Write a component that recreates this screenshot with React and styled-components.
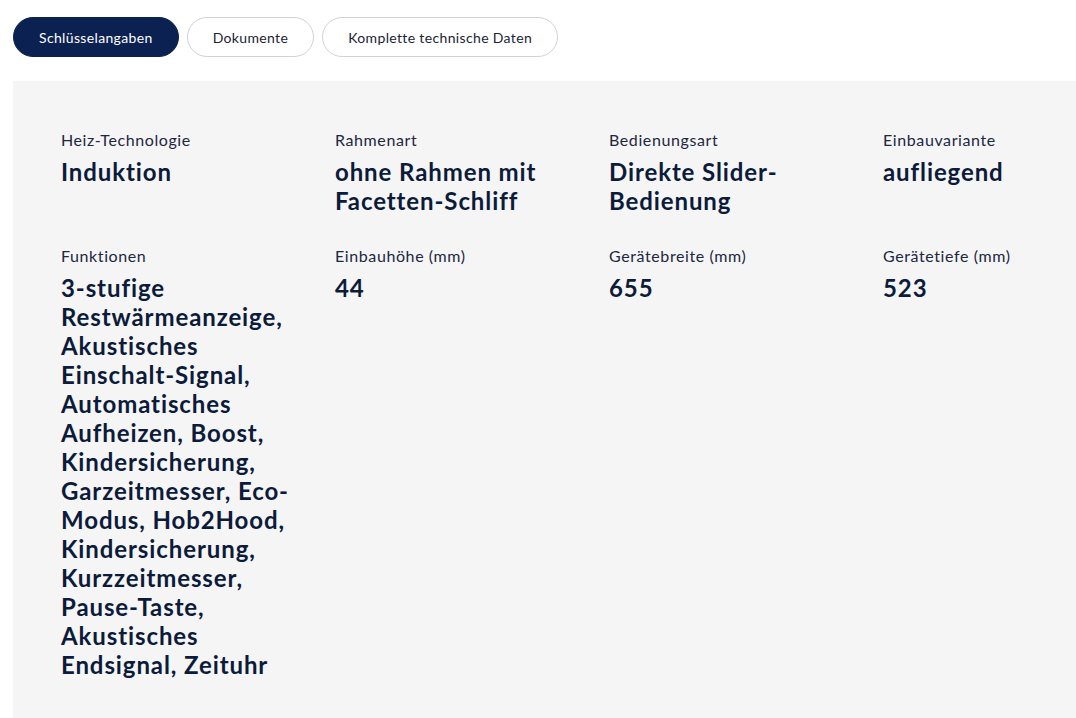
import React, { useState } from "react"
import styled, { createGlobalStyle } from "styled-components"

const GlobalStyle = createGlobalStyle`
  html, body {
    margin: 0;
    padding: 0;
    overflow: hidden;
    background: #ffffff;
  }
  body {
    font-family: Lato, "Open Sans", Arial, sans-serif;
    color: #0c1b3a;
  }
`

const Page = styled.div`
  padding: 17px 0 0 13px;
  width: 1200px;
`

const TabBar = styled.div`
  display: flex;
  gap: 8px;
  margin-bottom: 24px;
`

const Tab = styled.button`
  height: 40px;
  padding: 0 25px;
  border-radius: 20px;
  font-family: inherit;
  font-size: 14px;
  letter-spacing: 0.35px;
  cursor: pointer;
  border: 1px solid ${p => (p.$active ? "#0b2152" : "#cfd2d8")};
  background: ${p => (p.$active ? "#0b2152" : "#ffffff")};
  color: ${p => (p.$active ? "#ffffff" : "#1b2336")};
`

const Panel = styled.div`
  background: #f5f5f6;
  padding: 48px 48px 48px;
  width: 1072px;
`

const SpecGrid = styled.dl`
  display: grid;
  grid-template-columns: repeat(4, 250px);
  column-gap: 24px;
  row-gap: 30px;
  margin: 0;
`

const Spec = styled.div`
  display: flex;
  flex-direction: column;
`

const Label = styled.dt`
  font-size: 16px;
  line-height: 22px;
  letter-spacing: 0.6px;
  color: #1c2740;
`

const Value = styled.dd`
  margin: 6px 0 0;
  font-size: 24px;
  line-height: 29px;
  letter-spacing: 0.9px;
  font-weight: 700;
  color: #0c1b3a;
`

const tabs = ["Schlüsselangaben", "Dokumente", "Komplette technische Daten"]

const specs = [
  { label: "Heiz-Technologie", value: "Induktion" },
  { label: "Rahmenart", value: "ohne Rahmen mit Facetten-Schliff" },
  { label: "Bedienungsart", value: "Direkte Slider-Bedienung" },
  { label: "Einbauvariante", value: "aufliegend" },
  {
    label: "Funktionen",
    value:
      "3-stufige Restwärmeanzeige, Akustisches Einschalt-Signal, Automatisches Aufheizen, Boost, Kindersicherung, Garzeitmesser, Eco-Modus, Hob2Hood, Kindersicherung, Kurzzeitmesser, Pause-Taste, Akustisches Endsignal, Zeituhr",
  },
  { label: "Einbauhöhe (mm)", value: "44" },
  { label: "Gerätebreite (mm)", value: "655" },
  { label: "Gerätetiefe (mm)", value: "523" },
]

export default function App() {
  const [active, setActive] = useState(0)

  return (
    <>
      <GlobalStyle />
      <Page>
        <TabBar>
          {tabs.map((t, i) => (
            <Tab key={t} $active={i === active} onClick={() => setActive(i)}>
              {t}
            </Tab>
          ))}
        </TabBar>

        <Panel>
          <SpecGrid>
            {specs.map(s => (
              <Spec key={s.label}>
                <Label>{s.label}</Label>
                <Value>{s.value}</Value>
              </Spec>
            ))}
          </SpecGrid>
        </Panel>
      </Page>
    </>
  )
}
